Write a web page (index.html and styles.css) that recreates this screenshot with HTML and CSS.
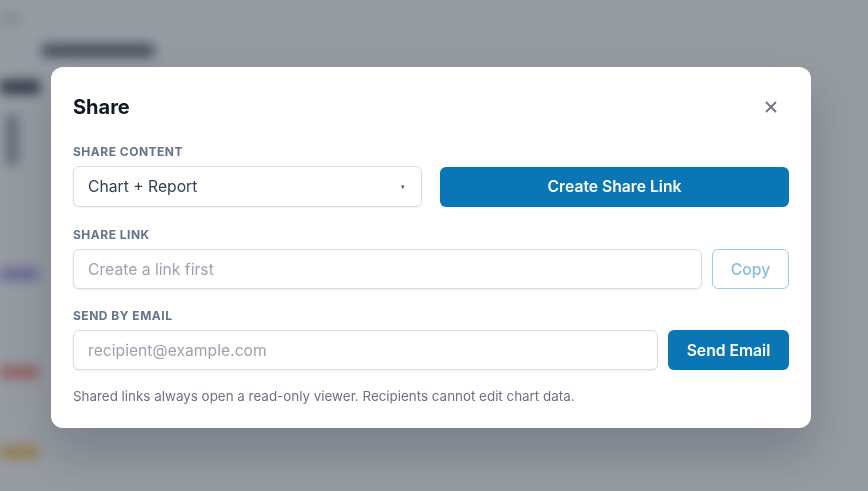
FILE: index.html
```html
<!DOCTYPE html>
<html lang="en">
<head>
  <meta charset="UTF-8" />
  <meta name="viewport" content="width=device-width, initial-scale=1.0" />
  <title>Share</title>
  <link rel="stylesheet" href="styles.css">
</head>
<body>

  <!-- Page behind the dialog -->
  <div class="page">
    <div class="page-top"></div>
    <div class="page-title"></div>
    <div class="page-heading"></div>
    <div class="page-side"></div>
    <div class="page-tag purple"></div>
    <div class="page-tag red"></div>
    <div class="page-tag orange"></div>
  </div>

  <!-- Share dialog -->
  <div class="overlay">
    <div class="modal">
      <div class="modal-header">
        <h2>Share</h2>
        <button class="close-btn" aria-label="Close">
          <svg width="12" height="12" viewBox="0 0 12 12">
            <path d="M1.5 1.5 L10.5 10.5 M10.5 1.5 L1.5 10.5" stroke="#6b7280" stroke-width="1.8" stroke-linecap="round" />
          </svg>
        </button>
      </div>

      <div class="field field-first">
        <label>Share content</label>
        <div class="row two-col">
          <div class="select">
            <span>Chart + Report</span>
            <span class="caret">&#9662;</span>
          </div>
          <button class="btn btn-primary">Create Share Link</button>
        </div>
      </div>

      <div class="field">
        <label>Share link</label>
        <div class="row">
          <input class="input" type="text" placeholder="Create a link first" readonly>
          <button class="btn btn-outline" disabled>Copy</button>
        </div>
      </div>

      <div class="field">
        <label>Send by email</label>
        <div class="row">
          <input class="input" type="email" placeholder="recipient@example.com">
          <button class="btn btn-primary btn-send">Send Email</button>
        </div>
      </div>

      <p class="note">Shared links always open a read-only viewer. Recipients cannot edit chart data.</p>
    </div>
  </div>

</body>
</html>
```

FILE: styles.css
```css
body {
  font-family: 'Inter', 'Liberation Sans', sans-serif;
  margin: 0;
  padding: 0;
  background-color: #f8fafc;
  color: #111827;
  width: 868px;
  height: 491px;
  overflow: hidden;
}

/* Blurred page behind */
.page {
  position: relative;
  width: 868px;
  height: 491px;
  filter: blur(6px);
}

.page div {
  position: absolute;
}

.page-top {
  left: 0;
  top: 14px;
  width: 20px;
  height: 10px;
  background-color: #d4d7dd;
}

.page-title {
  left: 42px;
  top: 44px;
  width: 112px;
  height: 13px;
  background-color: #6b7280;
}

.page-heading {
  left: 0;
  top: 80px;
  width: 40px;
  height: 14px;
  background-color: #4b5563;
}

.page-side {
  left: 6px;
  top: 115px;
  width: 12px;
  height: 50px;
  background-color: #9ca3af;
}

.page-tag {
  left: 0;
  width: 38px;
  height: 12px;
}

.purple { top: 268px; background-color: #a5a0e0; }
.red { top: 366px; background-color: #f0908c; }
.orange { top: 446px; background-color: #f2c26a; }

.overlay {
  position: fixed;
  top: 0;
  left: 0;
  width: 100%;
  height: 100%;
  background-color: rgba(17, 24, 39, 0.42);
  display: flex;
  justify-content: center;
  align-items: flex-start;
}

.modal {
  margin-top: 67px;
  margin-left: -6px;
  width: 760px;
  box-sizing: border-box;
  background-color: white;
  border-radius: 12px;
  padding: 26px 22px 22px;
  box-shadow: 0 24px 48px rgba(15, 23, 42, 0.22);
}

.modal-header {
  display: flex;
  justify-content: space-between;
  align-items: center;
  margin-bottom: 23px;
}

.modal-header h2 {
  margin: 0;
  font-size: 20px;
  line-height: 28px;
  font-weight: 700;
  color: #111827;
}

.close-btn {
  background: none;
  border: none;
  padding: 4px;
  margin-right: 8px;
  cursor: pointer;
  display: flex;
}

.field {
  margin-bottom: 19px;
}

.field.field-first {
  margin-bottom: 20px;
}

.field label {
  display: block;
  font-size: 12px;
  line-height: 16px;
  font-weight: 700;
  letter-spacing: 0.5px;
  text-transform: uppercase;
  color: #64748b;
  margin-bottom: 6px;
}

.row {
  display: flex;
  gap: 10px;
  align-items: center;
}

.two-col {
  display: grid;
  grid-template-columns: 1fr 1fr;
  gap: 18px;
}

.select {
  height: 41px;
  box-sizing: border-box;
  border: 1px solid #d9dde3;
  border-radius: 6px;
  padding: 0 14px;
  display: flex;
  justify-content: space-between;
  align-items: center;
  font-size: 15.7px;
  color: #334155;
  box-shadow: 0 1px 2px rgba(15, 23, 42, 0.06);
}

.caret {
  font-size: 7px;
  color: #475569;
  margin-right: 2px;
}

.input {
  flex: 1;
  height: 40px;
  box-sizing: border-box;
  border: 1px solid #d9dde3;
  border-radius: 6px;
  padding: 0 14px;
  font-family: inherit;
  font-size: 15.7px;
  color: #334155;
  box-shadow: 0 1px 2px rgba(15, 23, 42, 0.08);
  outline: none;
}

.input::placeholder {
  color: #9ca3af;
}

.btn {
  height: 40px;
  box-sizing: border-box;
  border-radius: 6px;
  font-family: inherit;
  font-size: 15.7px;
  font-weight: 600;
  cursor: pointer;
}

.btn-primary {
  background-color: #0a76b6;
  color: white;
  border: none;
}

.btn-outline {
  width: 77px;
  background-color: white;
  color: #86bde0;
  border: 1px solid #9ccbe9;
  font-weight: 500;
}

.btn-send {
  width: 121px;
}

.note {
  margin: -3px 0 0;
  font-size: 13.4px;
  line-height: 20px;
  color: #6b7280;
}
```
